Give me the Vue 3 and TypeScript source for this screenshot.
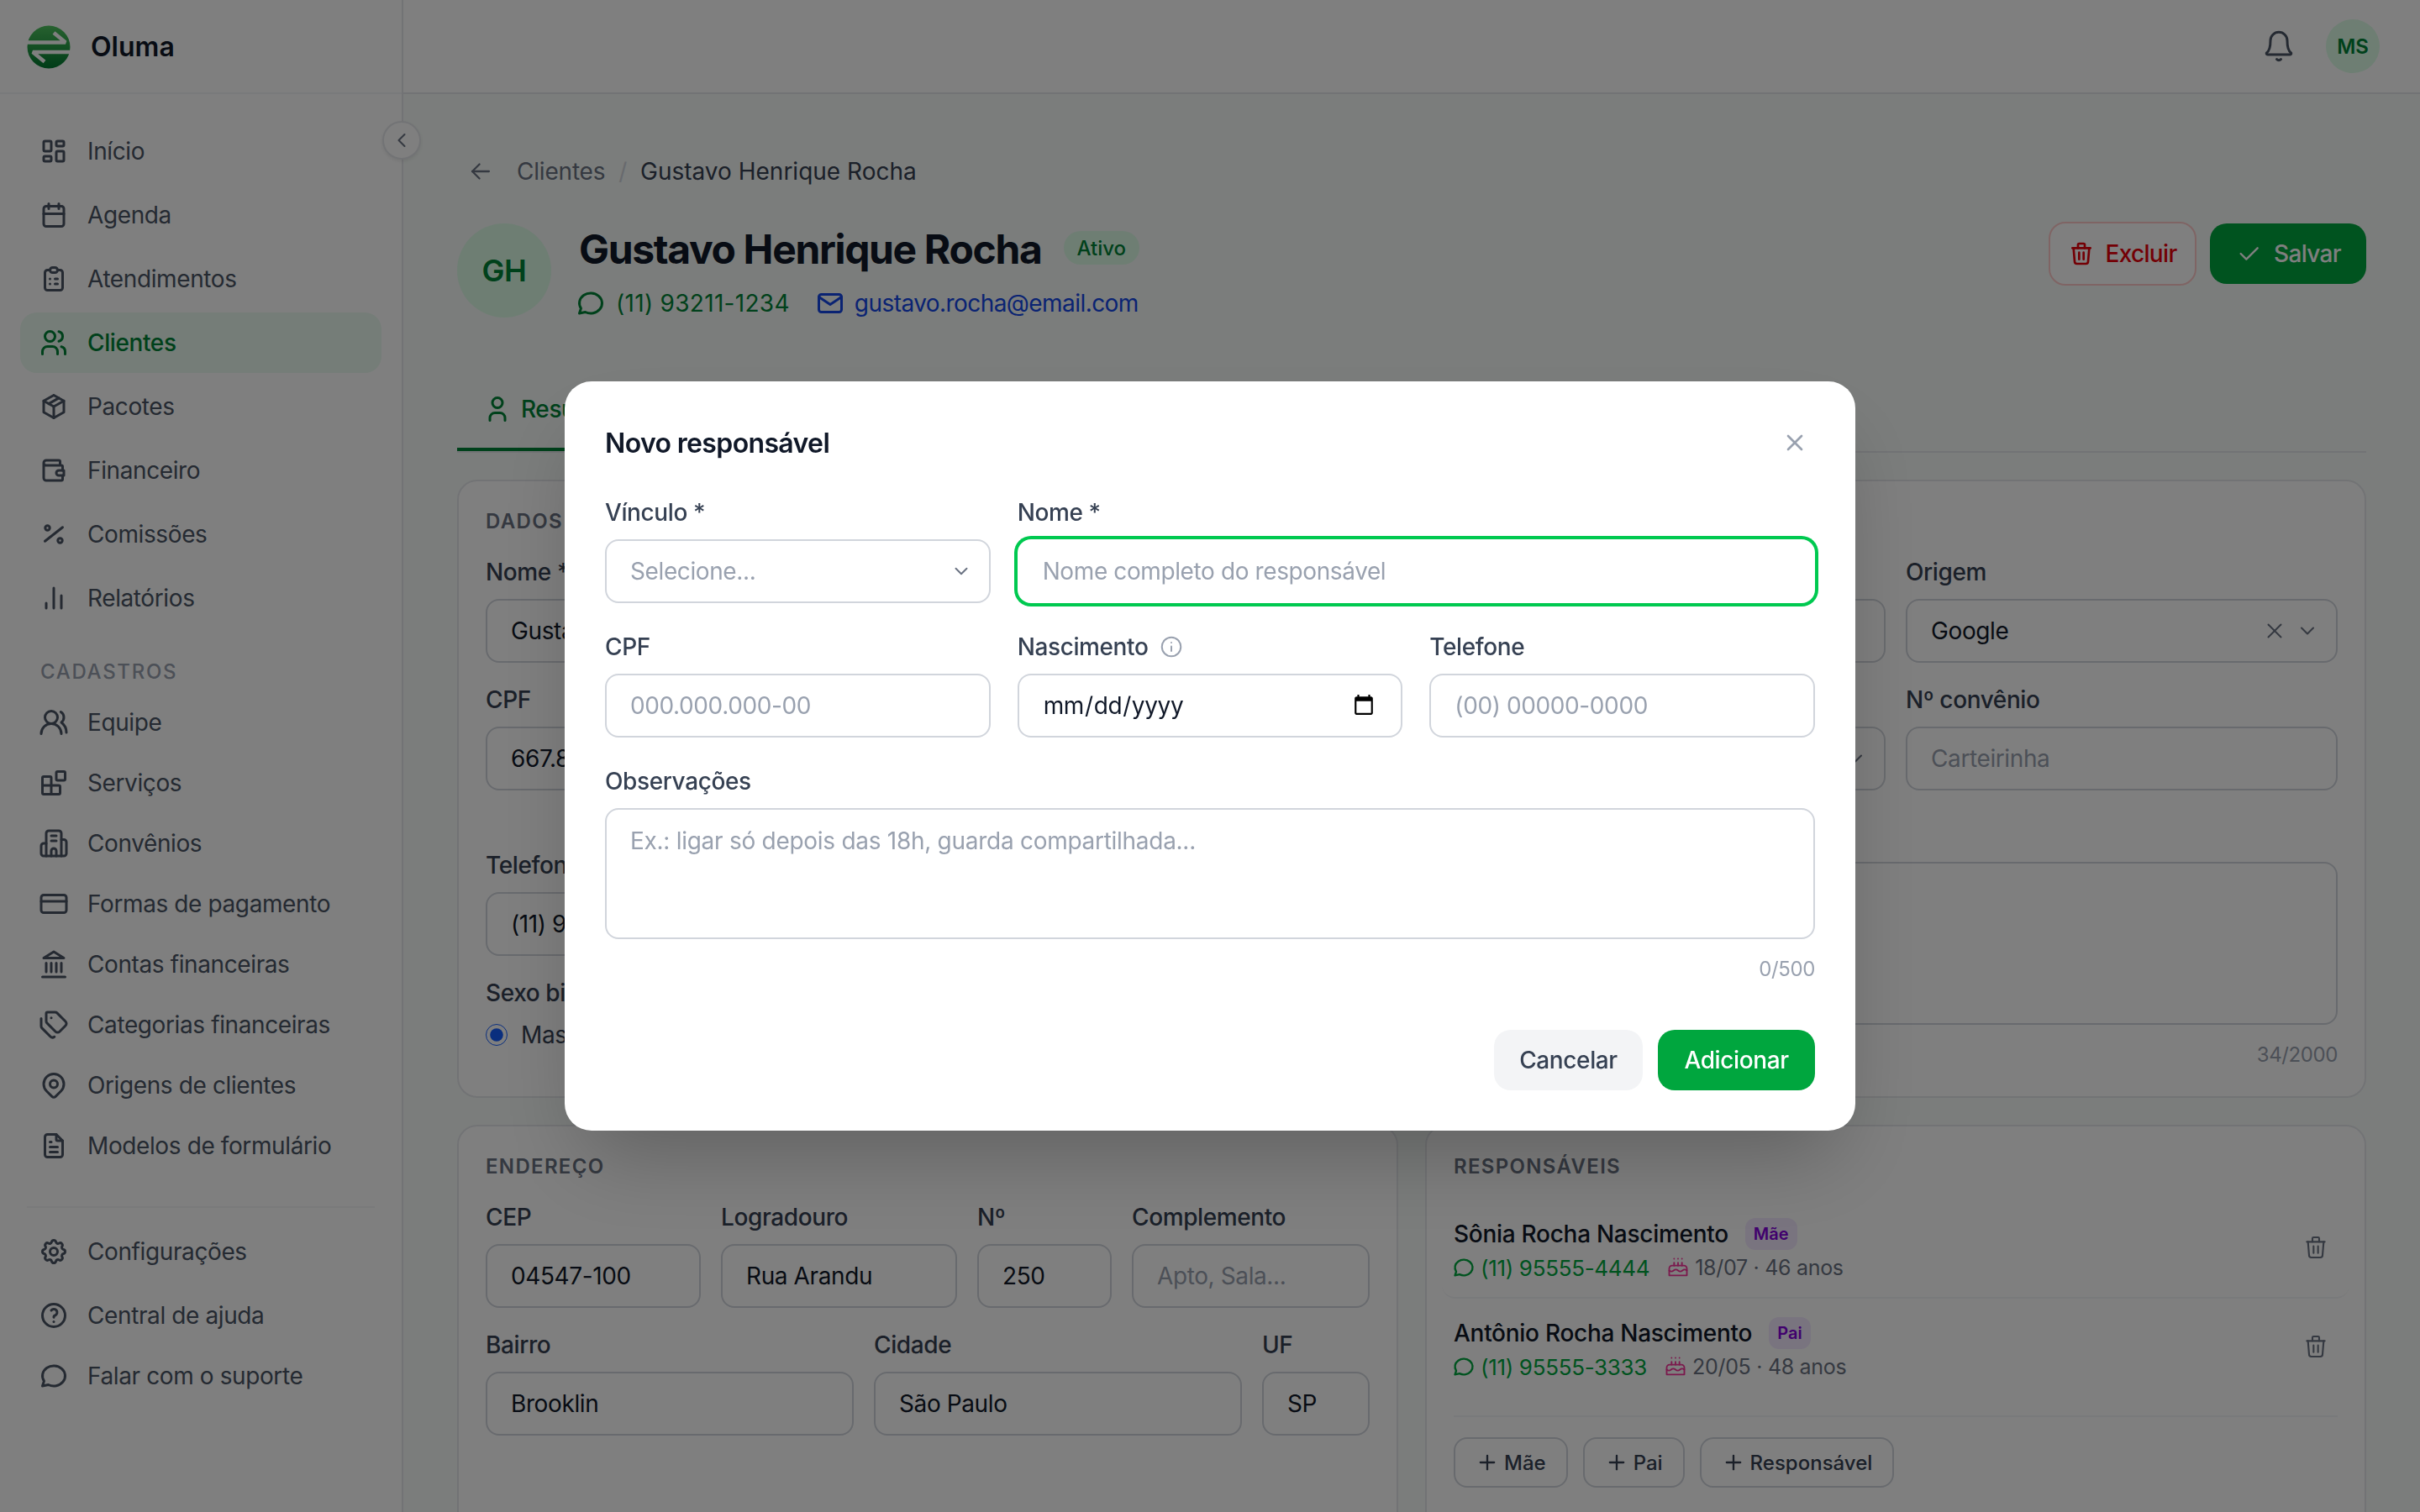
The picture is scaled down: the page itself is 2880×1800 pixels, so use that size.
<script setup lang="ts">
import { h } from 'vue'

const icons: Record<string, string[]> = {
  dash: ['M5 4h4a1 1 0 0 1 1 1v6a1 1 0 0 1-1 1H5a1 1 0 0 1-1-1V5a1 1 0 0 1 1-1', 'M5 16h4a1 1 0 0 1 1 1v2a1 1 0 0 1-1 1H5a1 1 0 0 1-1-1v-2a1 1 0 0 1 1-1', 'M15 12h4a1 1 0 0 1 1 1v6a1 1 0 0 1-1 1h-4a1 1 0 0 1-1-1v-6a1 1 0 0 1 1-1', 'M15 4h4a1 1 0 0 1 1 1v2a1 1 0 0 1-1 1h-4a1 1 0 0 1-1-1V5a1 1 0 0 1 1-1'],
  cal: ['M4 7a2 2 0 0 1 2-2h12a2 2 0 0 1 2 2v12a2 2 0 0 1-2 2H6a2 2 0 0 1-2-2V7', 'M16 3v4', 'M8 3v4', 'M4 11h16'],
  clip: ['M9 5H7a2 2 0 0 0-2 2v12a2 2 0 0 0 2 2h10a2 2 0 0 0 2-2V7a2 2 0 0 0-2-2h-2', 'M9 5a2 2 0 0 1 2-2h2a2 2 0 0 1 2 2a2 2 0 0 1-2 2h-2a2 2 0 0 1-2-2', 'M9 12h.01', 'M13 12h2', 'M9 16h.01', 'M13 16h2'],
  users: ['M5 7a4 4 0 1 0 8 0a4 4 0 1 0-8 0', 'M3 21v-2a4 4 0 0 1 4-4h4a4 4 0 0 1 4 4v2', 'M16 3.13a4 4 0 0 1 0 7.75', 'M21 21v-2a4 4 0 0 0-3-3.85'],
  pkg: ['M12 3l8 4.5v9L12 21l-8-4.5v-9L12 3', 'M12 12l8-4.5', 'M12 12v9', 'M12 12L4 7.5', 'M16 5.25l-8 4.5'],
  wallet: ['M17 8V5a1 1 0 0 0-1-1H6a2 2 0 0 0 0 4h12a1 1 0 0 1 1 1v3m0 4v3a1 1 0 0 1-1 1H6a2 2 0 0 1-2-2V6', 'M20 12v4h-4a2 2 0 0 1 0-4h4'],
  pct: ['M5.200 7a1.800 1.800 0 1 0 3.600 0a1.800 1.800 0 1 0-3.600 0', 'M15.200 17a1.800 1.800 0 1 0 3.600 0a1.800 1.800 0 1 0-3.600 0', 'M5 17.500L19 6.500'],
  bars: ['M6 20v-4', 'M12 20V4', 'M18 20V10'],
  team: ['M18 21a8 8 0 0 0-16 0', 'M15 8a5 5 0 1 1-10 0a5 5 0 0 1 10 0', 'M22 20c0-3.37-2-6.5-4-8a5 5 0 0 0-.45-8.3'],
  blocks: ['M15 3h5a1 1 0 0 1 1 1v5a1 1 0 0 1-1 1h-5a1 1 0 0 1-1-1V4a1 1 0 0 1 1-1', 'M10 21V8a1 1 0 0 0-1-1H4a1 1 0 0 0-1 1v12a1 1 0 0 0 1 1h12a1 1 0 0 0 1-1v-5a1 1 0 0 0-1-1H3'],
  build: ['M6 22V4a2 2 0 0 1 2-2h8a2 2 0 0 1 2 2v18Z', 'M6 12H4a2 2 0 0 0-2 2v6a2 2 0 0 0 2 2h2', 'M18 9h2a2 2 0 0 1 2 2v9a2 2 0 0 1-2 2h-2', 'M10 6h4', 'M10 10h4', 'M10 22v-4a2 2 0 0 1 4 0v4'],
  card: ['M4 5h16a2 2 0 0 1 2 2v10a2 2 0 0 1-2 2H4a2 2 0 0 1-2-2V7a2 2 0 0 1 2-2', 'M2 10h20'],
  bank: ['M3 22h18', 'M6 18v-7', 'M10 18v-7', 'M14 18v-7', 'M18 18v-7', 'M12 2l8 5H4z'],
  tags: ['M13.172 2a2 2 0 0 1 1.414.586l6.71 6.71a2.4 2.4 0 0 1 0 3.408l-4.592 4.592a2.4 2.4 0 0 1-3.408 0l-6.71-6.71A2 2 0 0 1 6 9.172V3a1 1 0 0 1 1-1z', 'M2 7v6.172a2 2 0 0 0 .586 1.414l6.71 6.71a2.4 2.4 0 0 0 3.191.193', 'M10 6.500h.01'],
  pin: ['M9 11a3 3 0 1 0 6 0a3 3 0 0 0-6 0', 'M17.657 16.657l-4.243 4.243a2 2 0 0 1-2.827 0l-4.244-4.243a8 8 0 1 1 11.314 0z'],
  file: ['M14 3v4a1 1 0 0 0 1 1h4', 'M17 21H7a2 2 0 0 1-2-2V5a2 2 0 0 1 2-2h7l5 5v11a2 2 0 0 1-2 2z', 'M9 9h1', 'M9 13h6', 'M9 17h6'],
  gear: ['M10.325 4.317c.426-1.756 2.924-1.756 3.35 0a1.724 1.724 0 0 0 2.573 1.066c1.543-.94 3.31.826 2.37 2.37a1.724 1.724 0 0 0 1.065 2.572c1.756.426 1.756 2.924 0 3.35a1.724 1.724 0 0 0-1.066 2.573c.94 1.543-.826 3.31-2.37 2.37a1.724 1.724 0 0 0-2.572 1.065c-.426 1.756-2.924 1.756-3.35 0a1.724 1.724 0 0 0-2.573-1.066c-1.543.94-3.31-.826-2.37-2.37a1.724 1.724 0 0 0-1.065-2.572c-1.756-.426-1.756-2.924 0-3.35a1.724 1.724 0 0 0 1.066-2.573c-.94-1.543.826-3.31 2.37-2.37c1 .608 2.296.07 2.572-1.065z', 'M9 12a3 3 0 1 0 6 0a3 3 0 0 0-6 0'],
  help: ['M3 12a9 9 0 1 0 18 0a9 9 0 0 0-18 0', 'M12 17v.01', 'M12 13.5a1.500 1.500 0 0 1 1-1.500a2.600 2.600 0 1 0-3-4'],
  chat: ['M3 20l1.300-3.900c-2.324-3.437-1.426-7.872 2.100-10.374c3.526-2.501 8.590-2.296 11.845.48c3.255 2.777 3.695 7.266 1.029 10.501c-2.666 3.235-7.615 4.215-11.574 2.293L3 20'],
  bell: ['M6 8a6 6 0 0 1 12 0c0 5 1 7.500 2.600 8.600.5.4.3 1.400-.6 1.400H4c-.9 0-1.100-1-.6-1.400C5 15.500 6 13 6 8Z', 'M10.500 21.300a2 2 0 0 0 3 0'],
  left: ['M15 6l-6 6 6 6'],
  arrow: ['M5 12h14', 'M5 12l6 6', 'M5 12l6-6'],
  mail: ['M5 5h14a2 2 0 0 1 2 2v10a2 2 0 0 1-2 2H5a2 2 0 0 1-2-2V7a2 2 0 0 1 2-2', 'M3 7l9 6 9-6'],
  user: ['M8 7a4 4 0 1 0 8 0a4 4 0 0 0-8 0', 'M6 21v-2a4 4 0 0 1 4-4h4a4 4 0 0 1 4 4v2'],
  trash: ['M4 7h16', 'M10 11v6', 'M14 11v6', 'M5 7l1 12a2 2 0 0 0 2 2h8a2 2 0 0 0 2-2l1-12', 'M9 7V4a1 1 0 0 1 1-1h4a1 1 0 0 1 1 1v3'],
  check: ['M5 12l5 5L20 7'],
  x: ['M18 6L6 18', 'M6 6l12 12'],
  down: ['M6 9l6 6 6-6'],
  plus: ['M12 5v14', 'M5 12h14'],
  info: ['M3 12a9 9 0 1 0 18 0a9 9 0 0 0-18 0', 'M12 16v-4.500', 'M12 8h.01'],
  cake: ['M3 20h18v-7a3 3 0 0 0-3-3H6a3 3 0 0 0-3 3v7z', 'M3 15c1.500 1.300 3 1.300 4.500 0s3-1.300 4.500 0 3 1.300 4.500 0 3-1.300 4.500 0', 'M8 7v3', 'M12 7v3', 'M16 7v3', 'M8 3v.01', 'M12 3v.01', 'M16 3v.01']
}

const Ico = (props: { n: string; s?: number; w?: number }) =>
  h(
    'svg',
    {
      width: props.s ?? 36,
      height: props.s ?? 36,
      viewBox: '0 0 24 24',
      fill: 'none',
      stroke: 'currentColor',
      'stroke-width': props.w ?? 2,
      'stroke-linecap': 'round',
      'stroke-linejoin': 'round'
    },
    (icons[props.n] ?? []).map((d) => h('path', { d }))
  )
Ico.props = ['n', 's', 'w']

const mainNav = [
  { i: 'dash', t: 'Início' },
  { i: 'cal', t: 'Agenda' },
  { i: 'clip', t: 'Atendimentos' },
  { i: 'users', t: 'Clientes', on: true },
  { i: 'pkg', t: 'Pacotes' },
  { i: 'wallet', t: 'Financeiro' },
  { i: 'pct', t: 'Comissões' },
  { i: 'bars', t: 'Relatórios' }
]
const regNav = [
  { i: 'team', t: 'Equipe' },
  { i: 'blocks', t: 'Serviços' },
  { i: 'build', t: 'Convênios' },
  { i: 'card', t: 'Formas de pagamento' },
  { i: 'bank', t: 'Contas financeiras' },
  { i: 'tags', t: 'Categorias financeiras' },
  { i: 'pin', t: 'Origens de clientes' },
  { i: 'file', t: 'Modelos de formulário' }
]
const responsaveis = [
  { n: 'Sônia Rocha Nascimento', v: 'Mãe', p: '(11) 95555-4444', d: '18/07 · 46 anos' },
  { n: 'Antônio Rocha Nascimento', v: 'Pai', p: '(11) 95555-3333', d: '20/05 · 48 anos' }
]
</script>

<template>
  <div class="app">
    <aside class="side">
      <div class="brand">
        <svg class="logo" width="52" height="52" viewBox="0 0 52 52">
          <defs>
            <linearGradient id="lg" x1="0" y1="0" x2="0" y2="1">
              <stop offset="0" stop-color="#4fc35f" />
              <stop offset="1" stop-color="#00772f" />
            </linearGradient>
          </defs>
          <circle cx="26" cy="26" r="25.500" fill="url(#lg)" />
          <path d="M0 20.500H46L32 9M52 32H7L21 43.500" fill="none" stroke="#fff" stroke-width="4.500" stroke-linejoin="bevel" />
        </svg>
        <span class="brand-name">Oluma</span>
      </div>
      <nav class="nav-main">
        <a v-for="m in mainNav" :key="m.t" class="item" :class="{ on: m.on }"><Ico :n="m.i" /><span>{{ m.t }}</span></a>
      </nav>
      <div class="sec-label">CADASTROS</div>
      <nav class="nav-reg">
        <a v-for="m in regNav" :key="m.t" class="item short"><Ico :n="m.i" /><span>{{ m.t }}</span></a>
      </nav>
      <div class="side-div"></div>
      <nav class="nav-reg">
        <a class="item short"><Ico n="gear" /><span>Configurações</span></a>
        <a class="item short push"><Ico n="help" /><span>Central de ajuda</span></a>
        <a class="item short"><Ico n="chat" /><span>Falar com o suporte</span></a>
      </nav>
    </aside>
    <button class="collapse"><Ico n="left" :s="28" :w="1.800" /></button>

    <div class="main">
      <header class="top">
        <Ico class="bell" n="bell" :s="40" :w="1.800" />
        <div class="me">MS</div>
      </header>
      <div class="content">
        <div class="crumb">
          <Ico class="crumb-back" n="arrow" :s="34" :w="1.600" />
          <span class="c1">Clientes</span><span class="c2">/</span><span class="c3">Gustavo Henrique Rocha</span>
        </div>
        <div class="head">
          <div class="head-l">
            <div class="gh">GH</div>
            <div>
              <div class="title-row">
                <h1>Gustavo Henrique Rocha</h1>
                <span class="ativo">Ativo</span>
              </div>
              <div class="contact">
                <span class="phone"><Ico n="chat" :s="36" /> (11) 93211-1234</span>
                <span class="mail"><Ico n="mail" :s="36" /> gustavo.rocha@email.com</span>
              </div>
            </div>
          </div>
          <div class="head-r">
            <button class="del"><Ico n="trash" :s="32" />Excluir</button>
            <button class="save"><Ico n="check" :s="32" :w="1.800" />Salvar</button>
          </div>
        </div>
        <div class="tabs">
          <div class="tab"><Ico n="user" :s="36" />Resumo</div>
        </div>

        <section class="card">
          <div class="sec">DADOS PESSOAIS</div>
          <div class="grid-a">
            <label class="f"><span class="l">Nome *</span><input class="in" value="Gustavo Henrique Rocha" /></label>
            <label class="f"><span class="l">Apelido</span><input class="in" placeholder="Como prefere ser chamado" /></label>
            <label class="f"><span class="l">Nascimento</span><input class="in" value="12/03/1990" /></label>
            <div class="f"><span class="l">Origem</span>
              <div class="in sel val">Google<span class="sel-ic"><Ico n="x" :s="30" :w="1.600" /><Ico n="down" :s="28" :w="1.800" /></span></div>
            </div>
            <label class="f"><span class="l">CPF</span><input class="in" value="667.890.123-45" /></label>
            <label class="f"><span class="l">RG</span><input class="in" placeholder="00.000.000-0" /></label>
            <div class="f"><span class="l">Convênio</span>
              <div class="in sel ph">Selecione...<span class="sel-ic"><Ico n="down" :s="28" :w="1.800" /></span></div>
            </div>
            <label class="f"><span class="l">Nº convênio</span><input class="in" placeholder="Carteirinha" /></label>
          </div>
          <div class="grid-b">
            <div class="col-l">
              <label class="f"><span class="l">Telefone</span><input class="in" value="(11) 93211-1234" /></label>
              <div class="f sexo"><span class="l">Sexo biológico</span>
                <span class="radio"><input type="radio" checked /> Masculino</span>
              </div>
            </div>
            <label class="f"><span class="l">Observações</span>
              <textarea class="ta" rows="3">Prefere horários após as 14 horas.</textarea>
              <span class="count">34/2000</span>
            </label>
          </div>
        </section>

        <div class="two">
          <section class="card">
            <div class="sec">ENDEREÇO</div>
            <div class="addr a1">
              <label class="f"><span class="l">CEP</span><input class="in" value="04547-100" /></label>
              <label class="f"><span class="l">Logradouro</span><input class="in" value="Rua Arandu" /></label>
              <label class="f"><span class="l">Nº</span><input class="in" value="250" /></label>
              <label class="f"><span class="l">Complemento</span><input class="in" placeholder="Apto, Sala..." /></label>
            </div>
            <div class="addr a2">
              <label class="f"><span class="l">Bairro</span><input class="in" value="Brooklin" /></label>
              <label class="f"><span class="l">Cidade</span><input class="in" value="São Paulo" /></label>
              <label class="f"><span class="l">UF</span><input class="in" value="SP" /></label>
            </div>
          </section>
          <section class="card">
            <div class="sec">RESPONSÁVEIS</div>
            <div class="rows">
              <div v-for="r in responsaveis" :key="r.n" class="row">
                <div class="row-txt">
                  <div class="row-n">{{ r.n }} <span class="vin">{{ r.v }}</span></div>
                  <div class="row-s">
                    <span class="row-p"><Ico n="chat" :s="28" /> {{ r.p }}</span>
                    <span class="row-d"><Ico class="cake" n="cake" :s="28" :w="1.600" /> {{ r.d }}</span>
                  </div>
                </div>
                <Ico class="row-del" n="trash" :s="32" :w="1.600" />
              </div>
            </div>
            <div class="row-line"></div>
            <div class="adds">
              <button class="add"><Ico n="plus" :s="28" />Mãe</button>
              <button class="add"><Ico n="plus" :s="28" />Pai</button>
              <button class="add"><Ico n="plus" :s="28" />Responsável</button>
            </div>
          </section>
        </div>
      </div>
    </div>

    <div class="overlay">
      <div class="modal">
        <div class="m-head">
          <h2>Novo responsável</h2>
          <Ico class="m-x" n="x" :s="32" />
        </div>
        <div class="m-grid">
          <div class="f"><span class="l m">Vínculo *</span>
            <div class="in sel ph">Selecione...<span class="sel-ic"><Ico n="down" :s="26" :w="1.800" /></span></div>
          </div>
          <label class="f span2"><span class="l m">Nome *</span><input class="in focus" placeholder="Nome completo do responsável" /></label>
          <label class="f"><span class="l m">CPF</span><input class="in" placeholder="000.000.000-00" /></label>
          <label class="f"><span class="l m">Nascimento <Ico class="inf" n="info" :s="30" :w="1.600" /></span><input class="in date" type="date" /></label>
          <label class="f"><span class="l m">Telefone</span><input class="in" placeholder="(00) 00000-0000" /></label>
          <label class="f span3"><span class="l m">Observações</span>
            <textarea class="ta small" placeholder="Ex.: ligar só depois das 18h, guarda compartilhada..."></textarea>
            <span class="count m-count">0/500</span>
          </label>
        </div>
        <div class="m-foot">
          <button class="cancel">Cancelar</button>
          <button class="addbtn">Adicionar</button>
        </div>
      </div>
    </div>
  </div>
</template>

<style scoped>
* { box-sizing: border-box; }
.app {
  display: flex;
  height: 100vh;
  overflow: hidden;
  font-family: Inter, "Noto Sans", sans-serif;
  font-size: 28px;
  letter-spacing: -0.014em;
  color: #101828;
  background: #fff;
  position: relative;
}
button { font-family: inherit; letter-spacing: inherit; cursor: pointer; }

/* sidebar */
.side { width: 480px; flex: none; border-right: 2px solid #e5e7eb; background: #fff; }
.brand { height: 112px; display: flex; align-items: center; padding-left: 32px; gap: 24px; padding-top: 1px; border-bottom: 2px solid #f3f4f6; }
.logo { flex: none; }
.brand-name { font-size: 32px; font-weight: 600; color: #101828; letter-spacing: 0; }
.nav-main { padding: 32px 24px 0; display: flex; flex-direction: column; gap: 4px; }
.nav-reg { padding: 0 24px; display: flex; flex-direction: column; gap: 4px; }
.item { height: 72px; display: flex; align-items: center; gap: 22px; padding-left: 22px; border-radius: 20px; color: #4a5565; font-size: 28px; }
.item.short { height: 68px; }
.item.push { margin-top: 4px; }
.item.on { background: #eafaf0; color: #008236; font-weight: 500; }
.item svg { flex: none; }
.sec-label { margin: 34px 0 8px 48px; height: 36px; line-height: 36px; font-size: 24px; font-weight: 500; letter-spacing: 0.07em; color: #99a1af; }
.side-div { height: 2px; margin: 38px 32px 18px; background: #f3f4f6; }
.collapse {
  position: absolute; left: 455px; top: 144px; width: 46px; height: 46px; border-radius: 50%;
  background: #fff; border: 2px solid #e5e7eb; color: #6a7282; padding: 0;
  display: flex; align-items: center; justify-content: center;
  box-shadow: 0 2px 4px rgba(0,0,0,.08);
}

/* main */
.main { flex: 1; min-width: 0; background: #f6fbf8; }
.top { height: 112px; background: #fff; border-bottom: 2px solid #e5e7eb; display: flex; align-items: center; justify-content: flex-end; padding-right: 48px; gap: 36px; }
.bell { color: #4a5565; }
.me { width: 64px; height: 64px; border-radius: 50%; background: #dcfce7; color: #008236; display: flex; align-items: center; justify-content: center; font-size: 24px; font-weight: 600; letter-spacing: 0; }
.content { padding: 72px 64px 0; }
.crumb { height: 40px; display: flex; align-items: center; line-height: 40px; }
.crumb-back { color: #6a7282; margin-right: 26px; margin-left: 11px; }
.c1 { color: #6a7282; letter-spacing: -0.007em; }
.c2 { color: #d1d5dc; margin: 0 16px; }
.c3 { color: #364153; font-weight: 400; letter-spacing: 0; }
.head { margin-top: 40px; display: flex; justify-content: space-between; align-items: flex-start; }
.head-l { display: flex; gap: 33px; margin-top: 2px; }
.gh { width: 112px; height: 112px; border-radius: 50%; background: #dcfce7; color: #008236; font-size: 36px; font-weight: 600; display: flex; align-items: center; justify-content: center; }
.title-row { display: flex; align-items: center; gap: 26px; height: 60px; }
h1 { margin: 0; font-size: 48px; font-weight: 700; color: #101828; letter-spacing: -0.028em; }
.ativo { height: 40px; padding: 0 16px; border-radius: 20px; background: #dcfce7; color: #008236; font-size: 24px; font-weight: 500; display: flex; align-items: center; letter-spacing: 0; margin-top: -2px; }
.contact { margin-top: 15px; display: flex; gap: 30px; height: 40px; align-items: center; }
.phone { display: flex; align-items: center; gap: 12px; color: #008236; margin-left: -4px; letter-spacing: 0.3px; }
.mail { display: flex; align-items: center; gap: 11px; color: #1447e6; letter-spacing: -0.02em; }
.head-r { display: flex; gap: 16px; align-items: center; }
.del { height: 76px; width: 176px; border: 2px solid #ffc9c9; border-radius: 20px; background: #fff; color: #e7000b; font-size: 28px; display: flex; align-items: center; justify-content: center; gap: 12px; font-weight: 500; letter-spacing: -0.024em; }
.save { height: 72px; width: 186px; border: 0; border-radius: 20px; background: #00a63e; color: #fff; font-size: 28px; font-weight: 500; display: flex; align-items: center; justify-content: center; gap: 14px; letter-spacing: -0.024em; }
.tabs { margin-top: 60px; border-bottom: 2px solid #e5e7eb; display: flex; }
.tab { display: flex; align-items: center; gap: 10px; height: 96px; padding: 0 36px 0 30px; border-bottom: 4px solid #008236; color: #008236; font-weight: 500; width: 330px; }

.card { background: #fff; border: 2px solid #e5e7eb; border-radius: 24px; padding: 32px; }
.content > .card { margin-top: 32px; height: 736px; }
.sec { height: 32px; line-height: 32px; font-size: 24px; font-weight: 600; letter-spacing: .055em; color: #6a7282; }
.f { display: flex; flex-direction: column; min-width: 0; }
.l { height: 40px; line-height: 40px; margin-bottom: 12px; font-size: 28px; font-weight: 500; color: #364153; display: flex; align-items: center; gap: 13px; }
.in {
  height: 76px; width: 100%; border: 2px solid #d1d5dc; border-radius: 16px; padding: 0 28px;
  font: 400 28px Inter, "Noto Sans", sans-serif; letter-spacing: -0.014em; color: #101828; background: #fff; outline: none;
}
.in::placeholder, .ta::placeholder { color: #99a1af; opacity: 1; }
.sel { display: flex; align-items: center; justify-content: space-between; padding-right: 14px; }
.ph { color: #99a1af; }
.sel-ic { display: flex; align-items: center; gap: 10px; color: #6a7282; padding-right: 6px; }
.focus { border-color: transparent; box-shadow: 0 0 0 4px #00c950; }
.date { color: #101828; }
.grid-a { margin-top: 24px; display: grid; grid-template-columns: repeat(3, 1fr) 514px; gap: 24px; }
.grid-b { margin-top: 33px; display: grid; grid-template-columns: 1094px 1fr; gap: 24px; }
.col-l { padding-top: 36px; }
.sexo { margin-top: 24px; }
.radio { display: flex; align-items: center; gap: 16px; height: 40px; color: #364153; margin-top: -2px; }
.radio input { width: 26px; height: 26px; margin: 0; accent-color: #155dfc; }
.ta { width: 100%; height: 194px; border: 2px solid #d1d5dc; border-radius: 16px; padding: 20px 30px; font: 400 28px/40px Inter, "Noto Sans", sans-serif; letter-spacing: -0.01em; color: #101828; resize: none; outline: none; display: block; }
.ta.small { height: 156px; padding: 17px 28px; }
.count { margin-top: 20px; height: 32px; line-height: 32px; font-size: 24px; color: #99a1af; text-align: right; }
.two { margin-top: 32px; display: grid; grid-template-columns: 1fr 1fr; gap: 32px; }
.two .card { height: 560px; }
.addr { display: grid; gap: 24px; }
.a1 { margin-top: 24px; grid-template-columns: 256fr 281fr 160fr 283fr; }
.a2 { margin-top: 24px; grid-template-columns: 438fr 438fr 128fr; }
.rows { margin: 23px -14px 0; }
.row { height: 118px; padding: 21px 14px 0; border-bottom: 2px solid #f3f4f6; border-radius: 16px; display: flex; justify-content: space-between; }
.row:last-child { border-bottom: 0; }
.row-n { height: 40px; display: flex; align-items: center; gap: 20px; font-weight: 500; font-size: 28px; color: #101828; letter-spacing: -0.01em; }
.vin { height: 38px; padding: 0 10px; border-radius: 12px; background: #f3e8ff; color: #8200db; font-size: 20px; font-weight: 600; display: flex; align-items: center; letter-spacing: 0; }
.row-s { height: 40px; display: flex; align-items: center; gap: 20px; font-size: 26px; }
.row-p { display: flex; align-items: center; gap: 6px; color: #00a63e; font-weight: 400; letter-spacing: -0.012em; margin-left: -2px; }
.row-d { display: flex; align-items: center; gap: 6px; color: #6a7282; font-size: 25px; letter-spacing: -0.012em; }
.cake { color: #f6339a; }
.row-del { color: #6a7282; margin-top: 20px; margin-right: 10px; }
.row-line { height: 2px; margin-top: 21px; background: #f3f4f6; }
.adds { margin-top: 24px; display: flex; gap: 18px; }
.add { height: 60px; border: 2px solid #d1d5dc; border-radius: 16px; background: #fff; color: #364153; font-size: 24px; font-weight: 500; padding: 0 24px; display: flex; align-items: center; gap: 6px; letter-spacing: 0; }

/* modal */
.overlay { position: fixed; inset: 0; background: rgba(0,0,0,.5); display: flex; align-items: center; justify-content: center; }
.modal { width: 1536px; height: 892px; background: #fff; border-radius: 32px; padding: 48px; box-shadow: 0 50px 100px -24px rgba(0,0,0,.25); }
.m-head { height: 50px; display: flex; align-items: center; justify-content: space-between; }
h2 { margin: 0; font-size: 32px; font-weight: 600; color: #101828; letter-spacing: -0.02em; }
.m-x { color: #99a1af; margin-right: 8px; }
.m-grid { margin-top: 38px; display: grid; grid-template-columns: repeat(3, 1fr); gap: 32px; }
.span2 { grid-column: span 2; }
.span3 { grid-column: span 3; }
.inf { color: #99a1af; }
.m-count { margin-top: 20px; }
.m-foot { margin-top: 56px; display: flex; justify-content: flex-end; gap: 18px; }
.cancel { width: 177px; height: 72px; border: 0; border-radius: 20px; background: #f3f4f6; color: #364153; font-size: 28px; font-weight: 500; }
.addbtn { width: 187px; height: 72px; border: 0; border-radius: 20px; background: #00a63e; color: #fff; font-size: 28px; font-weight: 500; }
</style>
